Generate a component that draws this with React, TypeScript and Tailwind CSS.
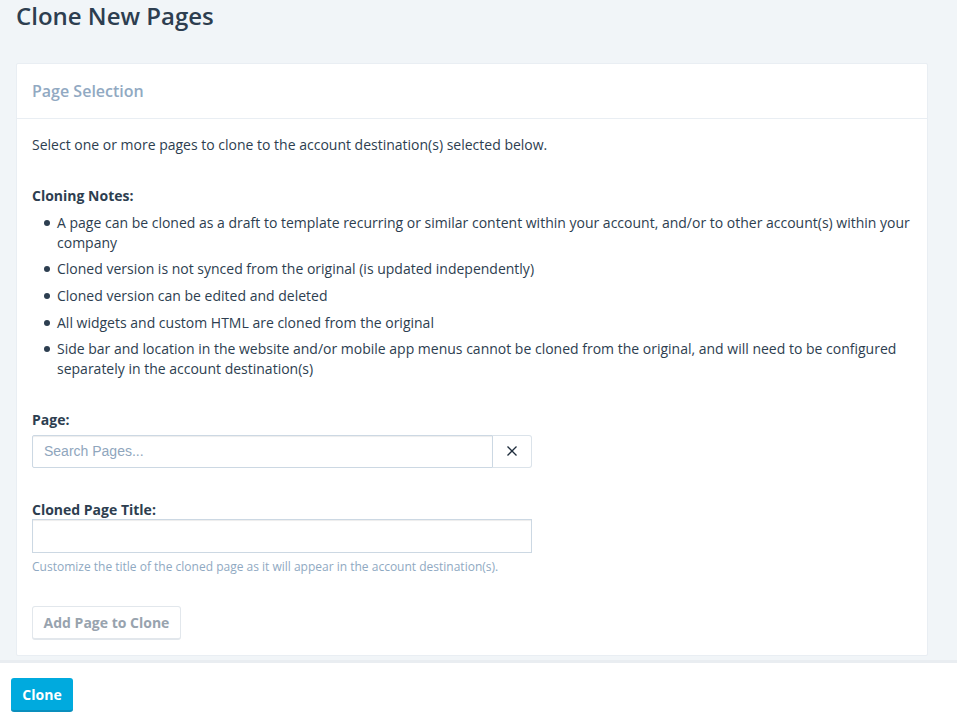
const notes = [
  'A page can be cloned as a draft to template recurring or similar content within your account, and/or to other account(s) within your company',
  'Cloned version is not synced from the original (is updated independently)',
  'Cloned version can be edited and deleted',
  'All widgets and custom HTML are cloned from the original',
  'Side bar and location in the website and/or mobile app menus cannot be cloned from the original, and will need to be configured separately in the account destination(s)',
];

export default function App() {
  return (
    <div className="flex h-[722px] flex-col overflow-hidden bg-[#f1f5f8] font-['Open_Sans',sans-serif] text-sm text-[#2d3e50]">
      <div className="min-h-0 flex-1 px-4">
        <h1 className="h-[63px] text-2xl leading-[31px] font-semibold text-[#2d3e50]">Clone New Pages</h1>

        <div className="w-[912px] rounded-[2px] border border-[#e9eef3] bg-white">
          <div className="flex h-[55px] items-center border-b border-[#e9eef3] px-[15px]">
            <h2 className="text-base font-semibold text-[#91a9c2]">Page Selection</h2>
          </div>

          <div className="px-[15px] pt-4 pb-[15px]">
            <p className="leading-5">Select one or more pages to clone to the account destination(s) selected below.</p>

            <p className="mt-[31px] leading-5 font-bold">Cloning Notes:</p>
            <ul className="mt-[1.8px] pl-3">
              {notes.map((note) => (
                <li key={note} className="flex pt-[5px] pb-[1.6px] leading-5">
                  <span className="mt-[7px] mr-[7px] h-[6px] w-[6px] shrink-0 rounded-full bg-[#2d3e50]" />
                  <span>{note}</span>
                </li>
              ))}
            </ul>

            <label className="mt-[29.2px] block leading-5 font-bold">Page:</label>
            <div className="mt-[5px] flex h-[33px] w-[500px]">
              <input
                placeholder="Search Pages..."
                className="min-w-0 flex-1 rounded-l-[2px] border border-[#ccd8e3] px-[11px] font-['Liberation_Sans',sans-serif] text-sm shadow-[inset_0_1px_1px_rgba(0,0,0,0.075)] outline-none placeholder:text-[#8fa6bd]"
              />
              <button className="flex w-[39px] items-center justify-center rounded-r-[3px] border border-l-0 border-[#dbe3ea] bg-white">
                <svg viewBox="0 0 12 12" className="h-3 w-3" fill="none" stroke="#1f2d3d" strokeWidth="1.3">
                  <path d="M1.5 1.5l9 9M10.5 1.5l-9 9" />
                </svg>
              </button>
            </div>

            <label className="mt-[32px] block leading-[19px] font-bold">Cloned Page Title:</label>
            <input className="block h-[34px] w-[500px] border border-[#ccd8e3] shadow-[inset_0_1px_1px_rgba(0,0,0,0.075)] outline-none" />
            <p className="mt-[5px] text-xs leading-[18px] text-[#8fa9c2]">
              Customize the title of the cloned page as it will appear in the account destination(s).
            </p>

            <button className="mt-[30px] block h-[34px] w-[149px] rounded-[3px] border border-b-2 border-[#e2e7ec] bg-white pt-[1px] text-center text-sm font-bold text-[#98a3ae]">
              Add Page to Clone
            </button>
          </div>
        </div>
      </div>

      <div className="h-[62px] border-t-[3px] border-[#e9edf1] bg-white px-[11px] pt-[15px]">
        <button className="h-[34px] w-[62px] rounded-[3px] border-b-2 border-[#0a8fbd] bg-[#00aade] pt-[1px] text-sm font-bold text-white">
          Clone
        </button>
      </div>
    </div>
  );
}
